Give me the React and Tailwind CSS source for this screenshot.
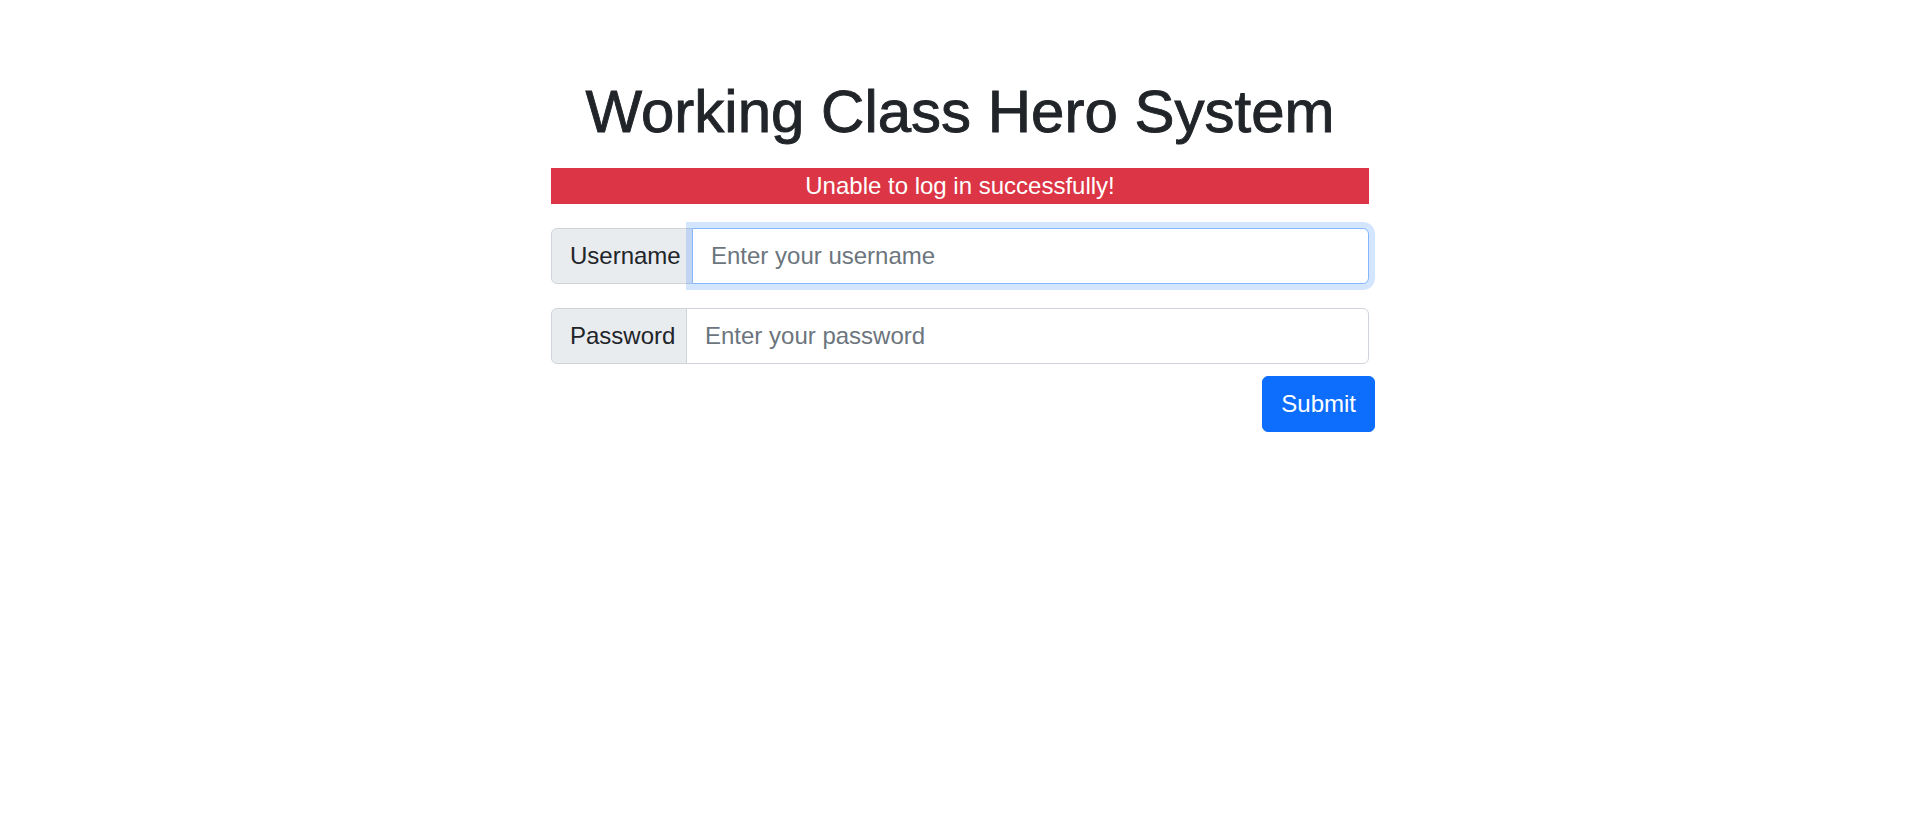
export default function App() {
  return (
    <div className="min-h-screen bg-white text-[#212529] font-['Segoe_UI','Liberation_Sans',Arial,sans-serif]">
      <div className="mx-auto w-[818px] pt-[76px]">
        {/* Title */}
        <h1 className="text-center text-[60px] leading-[72px] font-medium [-webkit-text-stroke:0.9px_#212529] mb-[20px]">
          Working Class Hero System
        </h1>

        {/* Error banner */}
        <div className="bg-[#dc3545] text-white text-center text-[24px] leading-[36px] mb-[24px]">
          Unable to log in successfully!
        </div>

        <form onSubmit={(e) => e.preventDefault()}>
          {/* Username */}
          <div className="flex mb-[24px]">
            <label
              htmlFor="username"
              className="w-[142px] shrink-0 flex items-center px-[18px] py-[9px] text-[24px] leading-[36px] bg-[#e9ecef] border border-[#ced4da] rounded-l-[6px] whitespace-nowrap"
            >
              Username
            </label>
            <input
              id="username"
              autoFocus
              placeholder="Enter your username"
              className="relative z-10 -ml-px flex-1 min-w-0 px-[18px] py-[9px] text-[24px] leading-[36px] bg-white border border-[#86b7fe] rounded-r-[6px] outline-none shadow-[0_0_0_6px_rgba(13,110,253,0.18)] placeholder:text-[#6c757d]"
            />
          </div>

          {/* Password */}
          <div className="flex mb-[12px]">
            <label
              htmlFor="password"
              className="w-[136px] shrink-0 flex items-center px-[18px] py-[9px] text-[24px] leading-[36px] bg-[#e9ecef] border border-[#ced4da] rounded-l-[6px] whitespace-nowrap"
            >
              Password
            </label>
            <input
              id="password"
              type="password"
              placeholder="Enter your password"
              className="-ml-px flex-1 min-w-0 px-[18px] py-[9px] text-[24px] leading-[36px] bg-white border border-[#ced4da] rounded-r-[6px] outline-none placeholder:text-[#6c757d]"
            />
          </div>

          <div className="flex justify-end -mr-[6px]">
            <button
              type="submit"
              className="px-[18px] py-[9px] text-[24px] leading-[36px] text-white bg-[#0d6efd] border border-[#0d6efd] rounded-[6px]"
            >
              Submit
            </button>
          </div>
        </form>
      </div>
    </div>
  );
}
